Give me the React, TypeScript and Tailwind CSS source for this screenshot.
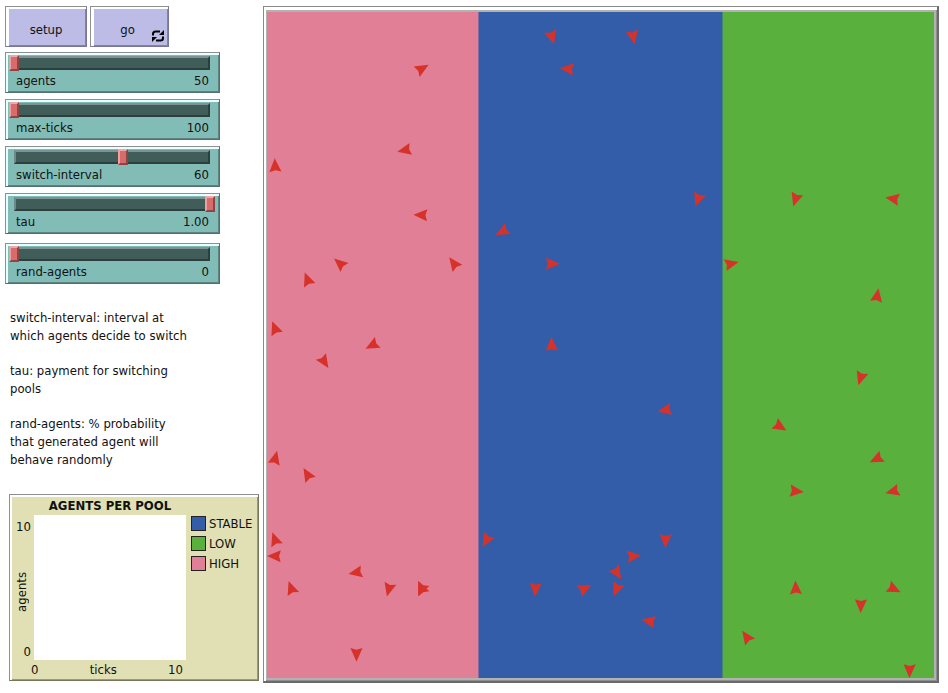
import { useState } from "react";

const SLIDERS = [
  { id: "agents", min: 50, max: 500, step: 1, value: 50, digits: 0 },
  { id: "max-ticks", min: 100, max: 1000, step: 1, value: 100, digits: 0 },
  { id: "switch-interval", min: 0, max: 108, step: 1, value: 60, digits: 0 },
  { id: "tau", min: 0, max: 1, step: 0.01, value: 1, digits: 2 },
  { id: "rand-agents", min: 0, max: 100, step: 1, value: 0, digits: 0 },
];

// Each agent: patch column, patch row, heading in degrees clockwise from north.
const AGENTS: [number, number, number][] = [
  [9, 3, 60], [8, 8, 258], [0, 9, 357], [9, 12, 272], [4, 15, 311],
  [11, 15, 323], [2, 16, 339], [0, 19, 339], [3, 21, 147], [6, 20, 242],
  [0, 27, 14], [2, 28, 329], [0, 32, 340], [0, 33, 271], [1, 35, 340],
  [5, 34, 259], [7, 35, 195], [9, 35, 205], [9, 35, 335], [5, 39, 180],
  [13, 32, 210], [17, 1, 163], [22, 1, 168], [18, 3, 275], [26, 11, 199],
  [14, 13, 242], [17, 15, 90], [17, 20, 358], [24, 24, 259], [24, 32, 180],
  [22, 33, 83], [21, 34, 147], [16, 35, 183], [19, 35, 64], [21, 35, 202],
  [23, 37, 281], [32, 11, 198], [38, 11, 280], [28, 15, 77], [37, 17, 10],
  [36, 22, 198], [31, 25, 122], [37, 27, 244], [32, 29, 96], [38, 29, 255],
  [32, 35, 358], [38, 35, 116], [36, 36, 181], [29, 38, 325], [39, 40, 181],
];

const LEGEND = [
  { name: "STABLE", color: "bg-[#345da9]" },
  { name: "LOW", color: "bg-[#59b03c]" },
  { name: "HIGH", color: "bg-[#e17f97]" },
];

const BUTTON =
  "relative h-[41px] border border-t-[#8f8f8f] border-l-[#8f8f8f] border-r-[#77779a] border-b-[#77779a] bg-[#bcbce6] pt-[6px] text-center shadow-[inset_3px_2px_0_#ffffff,inset_-1px_-1px_0_#8383a1]";

function Slider({ id, min, max, step, value, digits }: (typeof SLIDERS)[number]) {
  const [current, setCurrent] = useState(value);
  return (
    <div className="h-[41px] border border-t-[#8f8f8f] border-l-[#8f8f8f] border-r-[#52706f] border-b-[#52706f] bg-[#82bcb7] pt-[2px] pr-1 pl-[3px] shadow-[inset_2px_2px_0_#e8ffff,inset_-1px_-1px_0_#5b8380]">
      <div className="grid h-4 items-center">
        <div className="col-start-1 row-start-1 mx-[5px] h-[14px] border-2 border-t-[#7d9391] border-l-[#6b8a88] border-r-[#2c3f3d] border-b-[#2c3f3d] bg-[#415d5a]" />
        <input
          id={id}
          type="range"
          min={min}
          max={max}
          step={step}
          value={current}
          onChange={(e) => setCurrent(Number(e.target.value))}
          className="col-start-1 row-start-1 h-4 w-full appearance-none bg-transparent [&::-webkit-slider-thumb]:h-4 [&::-webkit-slider-thumb]:w-[10px] [&::-webkit-slider-thumb]:appearance-none [&::-webkit-slider-thumb]:border-2 [&::-webkit-slider-thumb]:border-t-[#f0a8a8] [&::-webkit-slider-thumb]:border-l-[#f0a0a0] [&::-webkit-slider-thumb]:border-r-[#8e4444] [&::-webkit-slider-thumb]:border-b-[#8e4444] [&::-webkit-slider-thumb]:bg-[#d66c6c]"
        />
      </div>
      <div className="flex justify-between pr-[6px] pl-[7px] leading-5">
        <label htmlFor={id}>{id}</label>
        <output htmlFor={id}>{current.toFixed(digits)}</output>
      </div>
    </div>
  );
}

function Plot() {
  return (
    <section className="mt-[25px] ml-1 grid h-[187px] grid-cols-[22px_152px_1fr] grid-rows-[20px_145px_1fr] border border-t-[#8f8f8f] border-l-[#8f8f8f] border-r-[#77775f] border-b-[#77775f] bg-[#e0e0b4] pl-[2px] shadow-[inset_2px_2px_0_#ffffff,inset_-1px_-1px_0_#9a9a7c]">
      <h2 className="col-start-2 text-center leading-[22px] font-bold">AGENTS PER POOL</h2>
      <div className="col-start-1 row-start-2 flex flex-col items-end justify-between pr-[3px]">
        <span className="leading-6">10</span>
        <span className="-rotate-180 self-center leading-3 [writing-mode:vertical-rl]">agents</span>
        <span className="leading-4">0</span>
      </div>
      <div className="col-start-2 row-start-2 bg-white" />
      <ul className="col-start-3 row-start-2 flex flex-col gap-[5px] pt-px pl-[5px]">
        {LEGEND.map((item) => (
          <li key={item.name} className="flex h-[15px] items-center gap-[3px]">
            <span className={`size-[15px] border border-[#222222] ${item.color}`} />
            <span className="leading-4">{item.name}</span>
          </li>
        ))}
      </ul>
      <div className="col-start-2 row-start-3 -ml-[3px] flex justify-between pr-[3px] leading-5">
        <span>0</span>
        <span>ticks</span>
        <span>10</span>
      </div>
    </section>
  );
}

function World() {
  return (
    <div className="min-w-0 flex-1 border-t border-r-2 border-b-2 border-l border-t-[#8a8a8a] border-r-[#6a6a6a] border-b-[#6a6a6a] border-l-[#8a8a8a] pt-[3px] pl-[2px]">
      <div className="border-r border-b border-[#8f8f8f]">
        <div className="border-t-2 border-r-2 border-b-2 border-l border-[#b2b2b2]">
          <svg
            viewBox="0 0 41 41"
            preserveAspectRatio="none"
            className="block aspect-[667/666] w-full"
            role="img"
            aria-label="Agents in the high, stable and low pools"
          >
            <rect width="41" height="41" fill="#e17f97" />
            <rect x="13" width="28" height="41" fill="#345da9" />
            <rect x="28" width="13" height="41" fill="#59b03c" />
            {AGENTS.map(([col, row, heading], i) => (
              <path
                key={i}
                d="M0 -150L-112 104L0 72L112 104Z"
                fill="#d73229"
                transform={`translate(${col + 0.5} ${row + 0.5}) rotate(${heading}) scale(${1 / 300})`}
              />
            ))}
          </svg>
        </div>
      </div>
    </div>
  );
}

export default function App() {
  return (
    <main className="flex items-start gap-1 bg-white pt-[6px] pr-[9px] pl-[5px] font-['DejaVu_Sans_Condensed','DejaVu_Sans',sans-serif] text-[13px] text-[#111111] [font-stretch:condensed]">
      <div className="w-[254px] shrink-0">
        <div className="flex gap-[3px]">
          <button type="button" className={`${BUTTON} w-[82px]`}>
            setup
          </button>
          <button type="button" className={`${BUTTON} w-[79px] pr-1`}>
            go
            <svg viewBox="0 0 12 12" className="absolute right-[4px] bottom-[4px] size-3" fill="none" stroke="#000000" strokeWidth="2">
              <path d="M1 5.5V4Q1 1.5 3.5 1.5H8" />
              <path d="M11 6.5V8Q11 10.5 8.5 10.5H4" />
              <path d="M12 0V5H7Z" fill="#000000" stroke="none" />
              <path d="M0 12V7H5Z" fill="#000000" stroke="none" />
            </svg>
          </button>
        </div>
        <div className="mt-[5px] flex w-[215px] flex-col gap-[6px]">
          {SLIDERS.slice(0, 4).map((s) => (
            <Slider key={s.id} {...s} />
          ))}
        </div>
        <div className="mt-[9px] w-[215px]">
          <Slider {...SLIDERS[4]} />
        </div>
        <div className="mt-[25px] ml-[5px] flex w-[190px] flex-col gap-[17px] leading-[18px]">
          <p>
            switch-interval: interval at
            <br />
            which agents decide to switch
          </p>
          <p>
            tau: payment for switching
            <br />
            pools
          </p>
          <p>
            rand-agents: % probability
            <br />
            that generated agent will
            <br />
            behave randomly
          </p>
        </div>
        <Plot />
      </div>
      <World />
    </main>
  );
}
